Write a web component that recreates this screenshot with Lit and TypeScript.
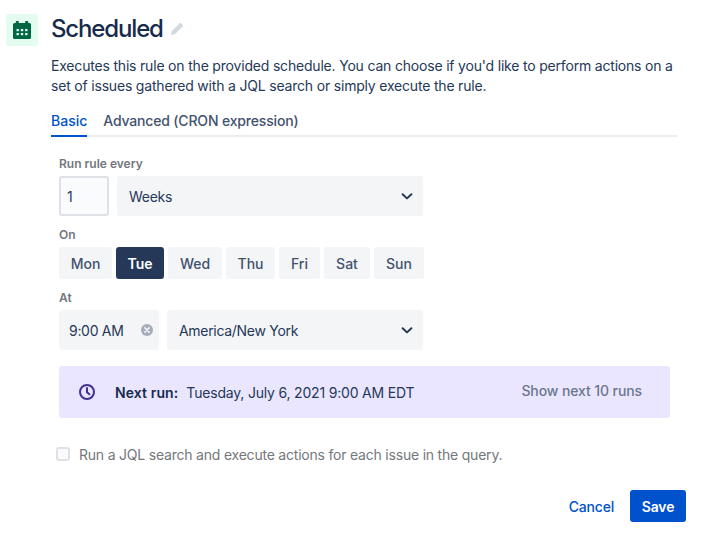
import { LitElement, html, css } from "lit";
import { customElement } from "lit/decorators.js";

const chevron = html`<svg class="chev" width="24" height="24" viewBox="0 0 24 24"><path d="M7.6 10.2 12 14.4l4.4-4.2" fill="none" stroke="#253858" stroke-width="2" stroke-linecap="round" stroke-linejoin="round"/></svg>`;

@customElement("app-root")
export class AppRoot extends LitElement {
  static styles = css`
    :host { display: block; width: 722px; height: 538px; background: #fff; font-family: Inter, "Noto Sans", sans-serif; color: #172b4d; box-sizing: border-box; overflow: hidden; }
    .page { display: flex; flex-direction: column; padding: 14px 36px 0 6px; box-sizing: border-box; height: 538px; }
    .head { display: flex; gap: 13px; }
    .icobox { width: 32px; height: 32px; background: #e3fcef; border-radius: 3px; display: flex; align-items: center; justify-content: center; flex: none; }
    .main { flex: 1; min-width: 0; }
    .titlerow { display: flex; align-items: center; height: 30px; gap: 7px; }
    h1 { margin: 0; font-size: 24px; line-height: 30px; font-weight: 500; letter-spacing: -1.15px; color: #172b4d; }
    .desc { margin: 12px 0 0; font-size: 14px; line-height: 20px; color: #253858; width: 630px; letter-spacing: -0.19px; }
    .tabs { display: flex; gap: 16px; margin-top: 10px; border-bottom: 2px solid #ebecf0; width: 626px; height: 29px; box-sizing: content-box; }
    .tab { font-size: 14px; line-height: 20px; font-weight: 500; color: #42526e; padding-top: 5px; height: 29px; box-sizing: border-box; margin-bottom: -2px; letter-spacing: -0.17px; }
    .tab.on { color: #0052cc; border-bottom: 2px solid #0052cc; height: 31px; letter-spacing: 0; }
    .form { padding-left: 8px; }
    label { display: block; font-size: 12px; line-height: 16px; font-weight: 600; color: #74777c; }
    .row { display: flex; }
    .r1 { gap: 8px; margin-top: 4px; }
    .l1 { margin-top: 19px; }
    .l2 { margin-top: 11px; }
    .input { width: 50px; height: 40px; box-sizing: border-box; border: 2px solid #dfe1e6; background: #fafbfc; border-radius: 3px; font-size: 14px; line-height: 20px; padding: 9px 6px; color: #253858; }
    .select { height: 40px; background: #f4f5f7; border-radius: 3px; display: flex; align-items: center; justify-content: space-between; font-size: 14px; color: #253858; box-sizing: border-box; padding: 0 4px 0 12px; letter-spacing: -0.3px; }
    .weeks { width: 306px; }
    .tz { width: 256px; }
    .time { width: 100px; padding: 0 5px 0 10px; }
    .days { gap: 4px; margin-top: 4px; }
    .day { height: 32px; background: #f4f5f7; border-radius: 3px; font-size: 14px; font-weight: 500; color: #42526e; display: flex; align-items: center; justify-content: center; box-sizing: border-box; }
    .day.on { background: #253858; color: #fff; font-weight: 600; }
    .banner { margin-top: 16px; width: 611px; height: 52px; background: #eae6ff; border-radius: 3px; display: flex; align-items: center; font-size: 14px; box-sizing: border-box; padding: 0 28px 0 19px; }
    .banner b { font-weight: 600; color: #172b4d; margin-left: 19px; margin-right: 8px; letter-spacing: 0.1px; }
    .banner .when { color: #253858; letter-spacing: -0.19px; }
    .banner .more { margin-left: auto; color: #6b778c; font-weight: 500; margin-top: -3px; letter-spacing: -0.1px; }
    .check { display: flex; align-items: center; margin-left: -3px; margin-top: 26px; height: 20px; }
    .box { width: 14px; height: 14px; box-sizing: border-box; border: 2px solid #dfe1e6; border-radius: 3px; background: #fafbfc; flex: none; }
    .check span { margin-left: 9px; font-size: 14px; color: #74777c; letter-spacing: -0.21px; }
    .foot { display: flex; justify-content: flex-end; align-items: center; margin-top: 26px; gap: 16px; }
    .link { font-size: 14px; font-weight: 500; color: #0052cc; letter-spacing: -0.2px; }
    .btn { width: 56px; height: 32px; background: #0052cc; color: #fff; border-radius: 3px; font-size: 14px; font-weight: 600; display: flex; align-items: center; justify-content: center; letter-spacing: -0.1px; }
  `;

  render() {
    const days: [string, number, boolean][] = [["Mon", 53, false], ["Tue", 48, true], ["Wed", 54, false], ["Thu", 49, false], ["Fri", 41, false], ["Sat", 46, false], ["Sun", 50, false]];
    return html`<div class="page">
      <div class="head">
        <div class="icobox">
          <svg width="18" height="18" viewBox="0 0 18 18"><path fill="#006644" d="M3.4 0h1.8a.6.6 0 0 1 .6.6V2h6.4V.6a.6.6 0 0 1 .6-.6h1.8a.6.6 0 0 1 .6.6V2h1.3A1.5 1.5 0 0 1 18 3.5v13a1.5 1.5 0 0 1-1.5 1.5h-15A1.5 1.5 0 0 1 0 16.5v-13A1.5 1.5 0 0 1 1.500 2h1.300V.6a.6.6 0 0 1 .6-.6Z"/><g fill="#e3fcef"><rect x="3.500" y="8" width="2.400" height="2.200"/><rect x="7.800" y="8" width="2.400" height="2.200"/><rect x="12.100" y="8" width="2.400" height="2.200"/><rect x="3.500" y="12" width="2.400" height="2.200"/><rect x="7.800" y="12" width="2.400" height="2.200"/><rect x="12.100" y="12" width="2.400" height="2.200"/></g></svg>
        </div>
        <div class="main">
          <div class="titlerow"><h1>Scheduled</h1>
            <svg width="14" height="14" viewBox="0 0 14 14"><path fill="#d5d8de" d="M9.600 1.200a1 1 0 0 1 1.400 0l1.800 1.800a1 1 0 0 1 0 1.400L5 12.200 1 13l.8-4z"/></svg>
          </div>
          <p class="desc">Executes this rule on the provided schedule. You can choose if you'd like to perform actions on a set of issues gathered with a JQL search or simply execute the rule.</p>
          <div class="tabs"><div class="tab on">Basic</div><div class="tab">Advanced (CRON expression)</div></div>
          <div class="form">
            <label class="l1">Run rule every</label>
            <div class="row r1"><div class="input">1</div><div class="select weeks">Weeks${chevron}</div></div>
            <label class="l2">On</label>
            <div class="row days">${days.map(([d, w, on]) => html`<div class="day ${on ? "on" : ""}" style="width:${w}px">${d}</div>`)}</div>
            <label class="l2">At</label>
            <div class="row r1">
              <div class="select time">9:00 AM
                <svg width="14" height="14" viewBox="0 0 14 14"><circle cx="7" cy="7" r="6" fill="#a5adba"/><path d="M4.900 4.900l4.200 4.200M9.100 4.900 4.900 9.100" stroke="#f4f5f7" stroke-width="1.500" stroke-linecap="round"/></svg>
              </div>
              <div class="select tz">America/New York${chevron}</div>
            </div>
            <div class="banner">
              <svg width="18" height="18" viewBox="0 0 18 18"><circle cx="9" cy="9" r="7" fill="none" stroke="#403294" stroke-width="2"/><path d="M9 5v4.200l2.400 2" fill="none" stroke="#403294" stroke-width="2" stroke-linecap="round" stroke-linejoin="round"/></svg>
              <b>Next run:</b><span class="when">Tuesday, July 6, 2021 9:00 AM EDT</span>
              <span class="more">Show next 10 runs</span>
            </div>
            <div class="check"><div class="box"></div><span>Run a JQL search and execute actions for each issue in the query.</span></div>
            <div class="foot"><span class="link">Cancel</span><div class="btn">Save</div></div>
          </div>
        </div>
      </div>
    </div>`;
  }
}
